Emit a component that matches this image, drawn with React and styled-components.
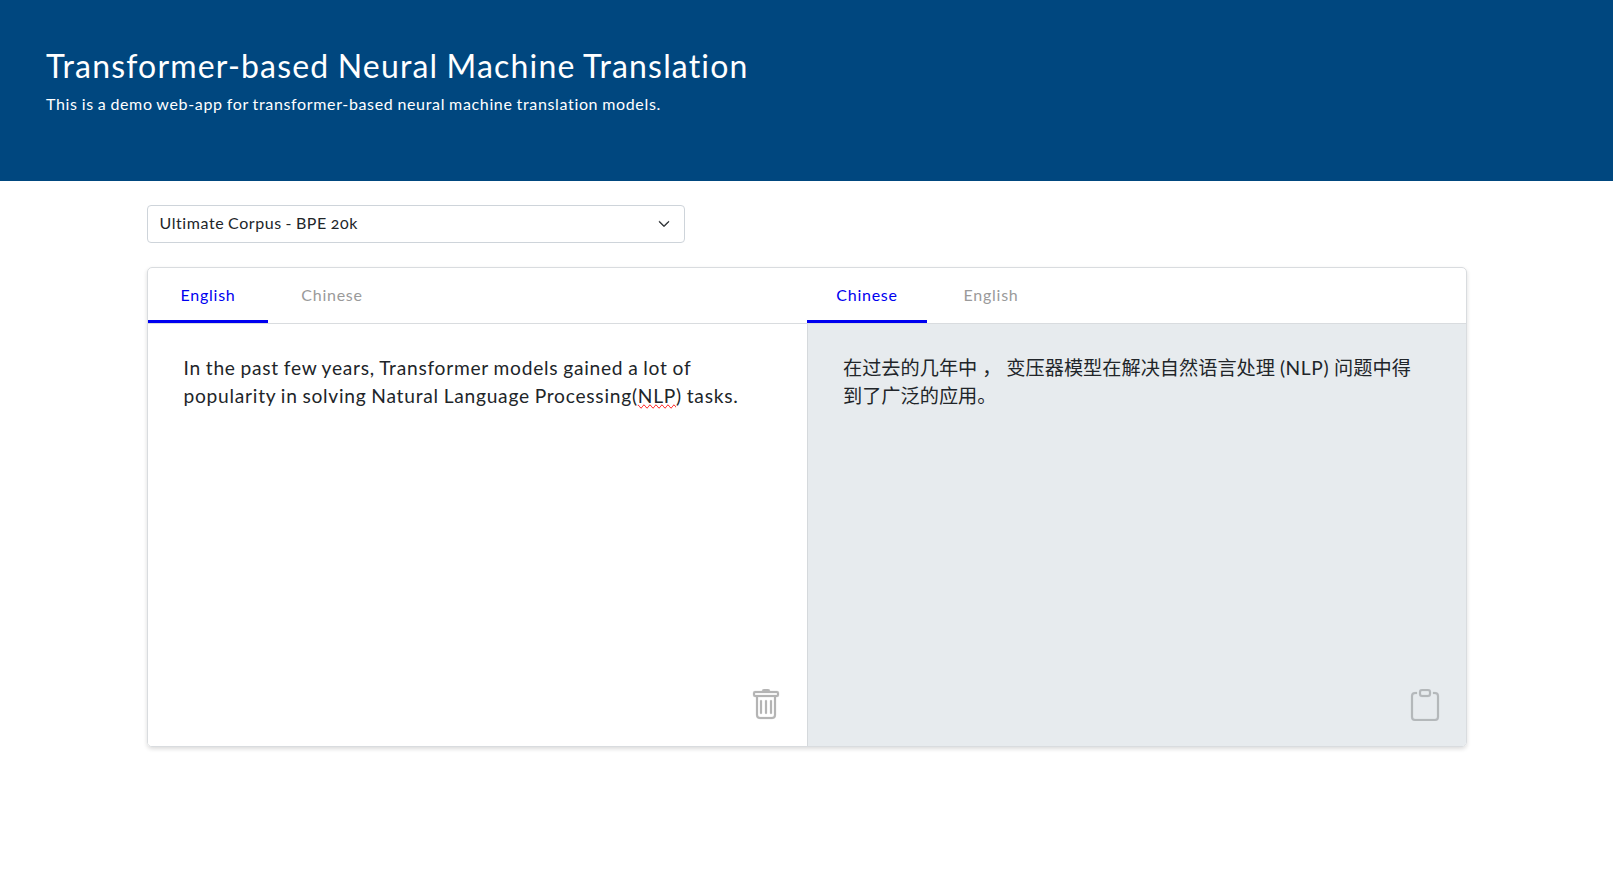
import React from "react";
import styled, { createGlobalStyle } from "styled-components";
import { BsTrash, BsClipboard, BsChevronDown } from "react-icons/bs";

const GlobalStyle = createGlobalStyle`
  *, *::before, *::after { box-sizing: border-box; }
  body {
    margin: 0;
    min-height: 100vh;
    background: #fff;
    color: #212529;
    font-family: Lato, "Noto Sans CJK SC", sans-serif;
    font-weight: 400;
    font-size: 16px;
    line-height: 24px;
    font-variant-numeric: oldstyle-nums;
  }
`;

const Hero = styled.header`
  height: 181px;
  padding: 47px 46px 0;
  background: #00477f;
  color: #fff;
`;

const Title = styled.h1`
  margin: 0 0 7px;
  font-size: 32px;
  font-weight: 400;
  line-height: 38px;
  letter-spacing: 1.17px;
  word-spacing: -1px;
  white-space: nowrap;
`;

const Subtitle = styled.p`
  margin: 0;
  letter-spacing: 0.65px;
  word-spacing: -0.7px;
  white-space: nowrap;
`;

const Container = styled.main`
  width: 1320px;
  margin: 0 auto 0 147px;
  padding: 24px 0 48px;
`;

const ModelSelect = styled.button`
  display: flex;
  align-items: center;
  justify-content: space-between;
  width: 538px;
  height: 38px;
  padding: 0 14px 2px 11.5px;
  border: 1px solid #ced4da;
  border-radius: 4px;
  background: #fff;
  color: inherit;
  font: inherit;
  font-variant-numeric: oldstyle-nums;
  letter-spacing: 0.57px;
  word-spacing: -0.8px;

  svg {
    margin-top: 2px;
  }
`;

const Card = styled.section`
  display: grid;
  grid-template-columns: 659px 1fr;
  height: 480px;
  margin-top: 24px;
  overflow: hidden;
  border: 1px solid #d9dcdf;
  border-radius: 5px;
  box-shadow: 0 2px 4px rgba(0, 0, 0, 0.14);
`;

const Column = styled.div`
  display: flex;
  flex-direction: column;
`;

const Tabs = styled.div`
  display: flex;
  gap: 4px;
  height: 56px;
  border-bottom: 1px solid #d9dcdf;
`;

const Tab = styled.button`
  width: 120px;
  padding: 2px 0 0;
  border: 0;
  border-bottom: 3px solid ${(p) => (p.$active ? "#0000f0" : "transparent")};
  background: none;
  color: ${(p) => (p.$active ? "#0000f0" : "#9a9a9a")};
  font: inherit;
  letter-spacing: 0.75px;
`;

const Pane = styled.div`
  flex: 1;
  display: flex;
  flex-direction: column;
  justify-content: space-between;
  padding: 30px 25px 25px ${(p) => (p.$output ? "35px" : "35.5px")};
  background: ${(p) => (p.$output ? "#e7ebee" : "#fff")};
  border-left: ${(p) => (p.$output ? "1px solid #d5d9dc" : "0")};
`;

const Passage = styled.p`
  margin: 0;
  font-size: 19.2px;
  line-height: 28px;
  white-space: nowrap;
`;

const Line = styled.span`
  display: block;
`;

const Latin = styled.span`
  letter-spacing: ${(p) => (p.$tight ? "0.6px" : "0.74px")};
  word-spacing: -0.8px;
`;

const Misspelled = styled.span`
  text-decoration-line: spelling-error;
`;

const IconButton = styled.button`
  display: flex;
  align-self: flex-end;
  padding: 0;
  border: 0;
  background: none;
  color: ${(p) => (p.$muted ? "#b5b8bb" : "#b5b5b5")};

  svg {
    stroke: currentColor;
    stroke-width: 0.1;
  }
`;

export default function App() {
  return (
    <>
      <GlobalStyle />
      <Hero>
        <Title>Transformer-based Neural Machine Translation</Title>
        <Subtitle>
          This is a demo web-app for transformer-based neural machine translation models.
        </Subtitle>
      </Hero>
      <Container>
        <ModelSelect>
          <span>Ultimate Corpus - BPE 20k</span>
          <BsChevronDown size={12} strokeWidth={1} />
        </ModelSelect>
        <Card>
          <Column>
            <Tabs>
              <Tab $active>English</Tab>
              <Tab>Chinese</Tab>
            </Tabs>
            <Pane>
              <Passage>
                <Latin>
                  <Line>In the past few years, Transformer models gained a lot of</Line>
                  <Line>
                    popularity in solving Natural Language Processing(<Misspelled>NLP</Misspelled>) tasks.
                  </Line>
                </Latin>
              </Passage>
              <IconButton aria-label="Clear">
                <BsTrash size={32} />
              </IconButton>
            </Pane>
          </Column>
          <Column>
            <Tabs>
              <Tab $active>Chinese</Tab>
              <Tab>English</Tab>
            </Tabs>
            <Pane $output>
              <Passage lang="zh-CN">
                <Line>
                  在过去的几年中 ， 变压器模型在解决自然语言处理 <Latin $tight>(NLP)</Latin> 问题中得
                </Line>
                <Line>到了广泛的应用。</Line>
              </Passage>
              <IconButton aria-label="Copy" $muted>
                <BsClipboard size={32} />
              </IconButton>
            </Pane>
          </Column>
        </Card>
      </Container>
    </>
  );
}
